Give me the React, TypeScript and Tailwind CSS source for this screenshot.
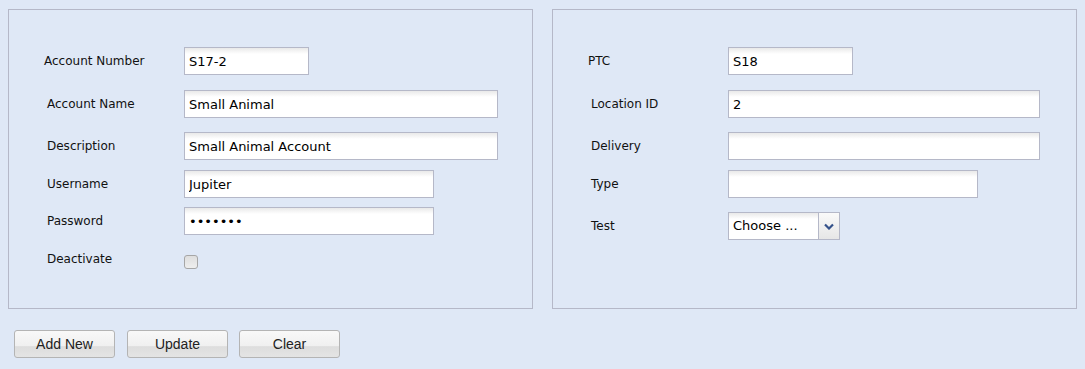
const label = "text-[12px] text-[#111] [font-family:'DejaVu_Sans',sans-serif]";
const field =
  "h-[28px] border border-[#b5b8c8] bg-[linear-gradient(to_bottom,#e9e9e9,#ffffff_6px)] px-[4px] text-[13px] text-black [font-family:'DejaVu_Sans',sans-serif] outline-none";

function Row({
  name,
  shift = true,
  top,
  children,
}: {
  name: string;
  shift?: boolean;
  top: string;
  children: React.ReactNode;
}) {
  return (
    <div className={`flex items-center ${top}`}>
      <span className={`${label} w-[140px] ${shift ? "pl-[3px]" : ""}`}>{name}</span>
      {children}
    </div>
  );
}

function Input({ value, width, type = "text" }: { value: string; width: string; type?: string }) {
  return <input type={type} defaultValue={value} className={`${field} ${width}`} />;
}

function Select() {
  return (
    <div className="flex h-[28px] w-[112px] border border-[#b5b8c8] bg-white">
      <div className="flex flex-1 items-center bg-[linear-gradient(to_bottom,#e9e9e9,#ffffff_6px)] px-[4px] text-[13px] text-black [font-family:'DejaVu_Sans',sans-serif]">
        Choose ...
      </div>
      <div className="flex w-[21px] items-center justify-center border-l border-[#b5b8c8] bg-[linear-gradient(to_bottom,#fafafa,#e6e6e6)]">
        <svg width="10" height="7" viewBox="0 0 10 7">
          <path d="M1 1.5 L5 5.5 L9 1.5" fill="none" stroke="#34518a" strokeWidth="2.2" />
        </svg>
      </div>
    </div>
  );
}

function Button({ text }: { text: string }) {
  return (
    <button className="h-[28px] w-[101px] rounded-[3px] border border-[#b4b4b4] bg-[linear-gradient(to_bottom,#f8f8f8,#f0f0f0_58%,#dddddd_60%,#e4e4e4)] text-[14px] text-[#222] [font-family:'Liberation_Sans',Arial,sans-serif]">
      {text}
    </button>
  );
}

export default function App() {
  return (
    <div className="h-[369px] w-[1085px] bg-[#dfe8f6] pl-[8px] pt-[9px]">
      <div className="flex gap-[19px]">
        {/* Account panel */}
        <div className="h-[300px] w-[525px] border border-[#b5b8c8] pl-[35px] pt-[37px]">
          <Row name="Account Number" shift={false} top="">
            <Input value="S17-2" width="w-[125px]" />
          </Row>
          <Row name="Account Name" top="mt-[15px]">
            <Input value="Small Animal" width="w-[314px]" />
          </Row>
          <Row name="Description" top="mt-[14px]">
            <Input value="Small Animal Account" width="w-[314px]" />
          </Row>
          <Row name="Username" top="mt-[10px]">
            <Input value="Jupiter" width="w-[250px]" />
          </Row>
          <Row name="Password" top="mt-[9px]">
            <Input value="Jupiter" type="password" width="w-[250px]" />
          </Row>
          <Row name="Deactivate" top="mt-[14px]">
            <span className="mt-[6px] h-[14px] w-[14px] rounded-[3px] border border-[#a6a6a6] bg-[linear-gradient(to_bottom,#dedede,#eeeeee)]" />
          </Row>
        </div>

        {/* Location panel */}
        <div className="h-[300px] w-[525px] border border-[#b5b8c8] pl-[35px] pt-[37px]">
          <Row name="PTC" shift={false} top="">
            <Input value="S18" width="w-[125px]" />
          </Row>
          <Row name="Location ID" top="mt-[15px]">
            <Input value="2" width="w-[312px]" />
          </Row>
          <Row name="Delivery" top="mt-[14px]">
            <Input value="" width="w-[312px]" />
          </Row>
          <Row name="Type" top="mt-[10px]">
            <Input value="" width="w-[250px]" />
          </Row>
          <Row name="Test" top="mt-[14px]">
            <Select />
          </Row>
        </div>
      </div>

      <div className="mt-[21px] flex pl-[6px]">
        <Button text="Add New" />
        <div className="ml-[12px]">
          <Button text="Update" />
        </div>
        <div className="ml-[11px]">
          <Button text="Clear" />
        </div>
      </div>
    </div>
  );
}
